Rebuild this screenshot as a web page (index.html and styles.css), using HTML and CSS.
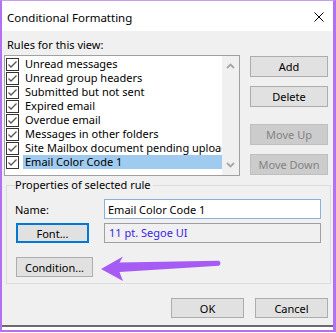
FILE: index.html
```html
<!DOCTYPE html>
<html lang="en">
<head>
    <meta charset="UTF-8">
    <meta name="viewport" content="width=device-width, initial-scale=1.0">
    <title>Conditional Formatting</title>
    <link rel="stylesheet" href="styles.css">
</head>
<body>

<div class="window">
    <div class="titlebar">
        <span class="title">Conditional Formatting</span>
        <svg class="close" width="10" height="10" viewBox="0 0 10 10">
            <path d="M0.5 0.5 L9.5 9.5 M9.5 0.5 L0.5 9.5" stroke="#000" stroke-width="1" fill="none"/>
        </svg>
    </div>

    <div class="dialog">
        <div class="rules-label">Rules for this view:</div>
        <div class="rules-row">
            <div class="rule-list">
                <div class="rules">
                    <div class="rule"><span class="check"><svg width="11" height="11" viewBox="0 0 11 11"><path d="M1.5 5.5 L4 8 L9.5 2.5" stroke="#555" stroke-width="1.3" fill="none"/></svg></span><span class="rule-name">Unread messages</span></div>
                    <div class="rule"><span class="check"><svg width="11" height="11" viewBox="0 0 11 11"><path d="M1.5 5.5 L4 8 L9.5 2.5" stroke="#555" stroke-width="1.3" fill="none"/></svg></span><span class="rule-name">Unread group headers</span></div>
                    <div class="rule"><span class="check"><svg width="11" height="11" viewBox="0 0 11 11"><path d="M1.5 5.5 L4 8 L9.5 2.5" stroke="#555" stroke-width="1.3" fill="none"/></svg></span><span class="rule-name">Submitted but not sent</span></div>
                    <div class="rule"><span class="check"><svg width="11" height="11" viewBox="0 0 11 11"><path d="M1.5 5.5 L4 8 L9.5 2.5" stroke="#555" stroke-width="1.3" fill="none"/></svg></span><span class="rule-name">Expired email</span></div>
                    <div class="rule"><span class="check"><svg width="11" height="11" viewBox="0 0 11 11"><path d="M1.5 5.5 L4 8 L9.5 2.5" stroke="#555" stroke-width="1.3" fill="none"/></svg></span><span class="rule-name">Overdue email</span></div>
                    <div class="rule"><span class="check"><svg width="11" height="11" viewBox="0 0 11 11"><path d="M1.5 5.5 L4 8 L9.5 2.5" stroke="#555" stroke-width="1.3" fill="none"/></svg></span><span class="rule-name">Messages in other folders</span></div>
                    <div class="rule"><span class="check"><svg width="11" height="11" viewBox="0 0 11 11"><path d="M1.5 5.5 L4 8 L9.5 2.5" stroke="#555" stroke-width="1.3" fill="none"/></svg></span><span class="rule-name">Site Mailbox document pending upload</span></div>
                    <div class="rule selected"><span class="check"><svg width="11" height="11" viewBox="0 0 11 11"><path d="M1.5 5.5 L4 8 L9.5 2.5" stroke="#555" stroke-width="1.3" fill="none"/></svg></span><span class="rule-name">Email Color Code 1</span></div>
                </div>
                <div class="scrollbar">
                    <svg width="9" height="6" viewBox="0 0 9 6"><path d="M1 5 L4.5 1.5 L8 5" stroke="#a6a6a6" stroke-width="1.8" fill="none"/></svg>
                    <svg width="9" height="6" viewBox="0 0 9 6"><path d="M1 1 L4.5 4.5 L8 1" stroke="#a6a6a6" stroke-width="1.8" fill="none"/></svg>
                </div>
            </div>
            <div class="side-buttons">
                <button class="btn">Add</button>
                <button class="btn">Delete</button>
                <button class="btn disabled move-up">Move Up</button>
                <button class="btn disabled">Move Down</button>
            </div>
        </div>

        <fieldset class="props">
            <legend>Properties of selected rule</legend>
            <div class="props-grid">
                <label for="ruleName">Name:</label>
                <input type="text" id="ruleName" class="name-input" value="Email Color Code 1">
                <button class="btn font-btn">Font...</button>
                <div class="font-box">11 pt. Segoe UI</div>
            </div>
            <button class="btn condition-btn">Condition...</button>
        </fieldset>

        <div class="footer">
            <button class="btn footer-btn">OK</button>
            <button class="btn footer-btn">Cancel</button>
        </div>
    </div>

    <svg class="arrow" width="126" height="32" viewBox="0 0 126 32">
        <path d="M3 17 L25 4.5 L21.5 10.5 L121 8.8 Q124 11 121 13.8 L21.5 20 L25 29 Z" fill="#a65cf4"/>
    </svg>
</div>

</body>
</html>
```

FILE: styles.css
```css
body {
    margin: 0;
    font-family: "Segoe UI", "Noto Sans", sans-serif;
    font-size: 11px;
    color: #000;
}
.window {
    position: relative;
    width: 331px;
    height: 329px;
    border-left: 2px solid #b270f2;
    border-right: 3px solid #b270f2;
    border-top: 1px solid #c79cf3;
    border-bottom: 2px solid #b270f2;
    background: #fff;
}
.titlebar {
    height: 30px;
    display: flex;
    align-items: center;
    justify-content: space-between;
    padding: 0 9px 0 5px;
    background: #fff;
}
.title {
    font-size: 11.5px;
    padding-top: 2px;
}
.close {
    margin-top: 2px;
}
.dialog {
    height: 294px;
    background: #f0f0f0;
    border-bottom: 2px solid #6b6b6b;
    padding: 0 5px 0 2px;
}
.rules-label {
    line-height: 16px;
    padding: 6px 0 0 3px;
    margin-bottom: 2px;
}
.rules-row {
    display: flex;
    align-items: flex-start;
}
.rule-list {
    width: 234px;
    height: 119px;
    border: 1px solid #a0a0a0;
    background: #fff;
    display: flex;
    overflow: hidden;
}
.rules {
    flex: 1;
    padding-top: 1px;
    overflow: hidden;
}
.rule {
    display: flex;
    align-items: center;
    height: 14px;
    white-space: nowrap;
}
.check {
    width: 11px;
    height: 11px;
    border: 1px solid #333;
    margin-left: 1px;
    background: #fff;
    display: flex;
    flex-shrink: 0;
}
.rule-name {
    flex: 1;
    margin-left: 4px;
    padding-left: 2px;
    line-height: 14px;
    overflow: hidden;
}
.rule.selected .rule-name {
    background: #9fcbf1;
}
.scrollbar {
    width: 17px;
    background: #f0f0f0;
    display: flex;
    flex-direction: column;
    justify-content: space-between;
    align-items: center;
    padding: 7px 0 7px;
}
.side-buttons {
    display: flex;
    flex-direction: column;
    margin-left: 10px;
    margin-top: 1px;
    gap: 9px;
}
.btn {
    font-family: inherit;
    font-size: 11px;
    color: #000;
    background: #e1e1e1;
    border: 1px solid #adadad;
    padding: 0;
    margin: 0;
    height: 21px;
    width: 78px;
}
.btn.disabled {
    background: #cccccc;
    border-color: #bfbfbf;
    color: #838383;
}
.btn.move-up {
    margin-top: 8px;
}
.props {
    margin: 1px 0 0 2px;
    width: 307px;
    border: 1px solid #dcdcdc;
    padding: 6px 8px 6px 8px;
}
.props legend {
    padding: 0 2px 0 0;
    line-height: 16px;
}
.props-grid {
    display: grid;
    grid-template-columns: 89px 217px;
    row-gap: 4px;
    align-items: center;
}
.name-input {
    box-sizing: border-box;
    height: 20px;
    width: 217px;
    margin: 0;
    border: 1px solid #8cb0dd;
    font-family: inherit;
    font-size: 11px;
    padding: 0 3px;
    outline: none;
}
.font-btn {
    width: 73px;
    height: 20px;
    margin-left: 1px;
    border: 2px solid #0078d7;
}
.font-box {
    box-sizing: border-box;
    height: 20px;
    border: 1px solid #a0a0a0;
    padding: 0 4px;
    line-height: 18px;
    color: #3a1ee6;
}
.condition-btn {
    display: block;
    width: 77px;
    height: 20px;
    margin: 14px 0 0 1px;
}
.footer {
    display: flex;
    justify-content: flex-end;
    gap: 11px;
    margin-top: 14px;
}
.footer-btn {
    width: 73px;
    height: 20px;
}
.arrow {
    position: absolute;
    left: 96px;
    top: 251px;
}
```
